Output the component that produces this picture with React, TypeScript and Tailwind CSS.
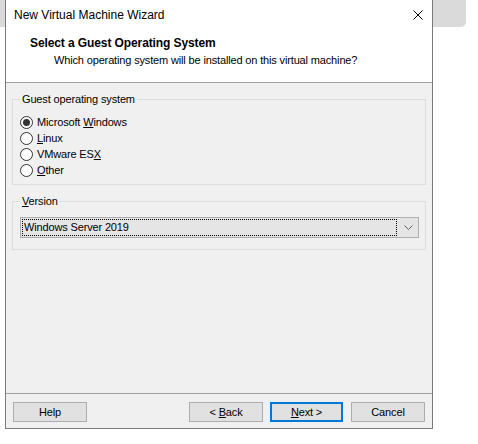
import React from "react";

const font = { fontFamily: '"Liberation Sans", Arial, sans-serif' };

// Segoe UI 9pt is narrower than Arial 12px; 11px with slight tracking matches widths
const body = "text-[11px] tracking-[-0.15px] text-black";

const Radio = ({ checked, children }: { checked?: boolean; children: React.ReactNode }) => (
  <label className="flex h-[16px] items-center pl-[7px]">
    <span className="flex h-[13px] w-[13px] items-center justify-center rounded-full border border-[#333333] bg-white">
      {checked && <span className="h-[7px] w-[7px] rounded-full bg-[#333333]" />}
    </span>
    <span className={"ml-[4px] leading-[16px] " + body}>{children}</span>
  </label>
);

const Btn = ({
  children,
  primary,
  className = "",
}: {
  children: React.ReactNode;
  primary?: boolean;
  className?: string;
}) => (
  <button
    className={
      "flex h-[20px] items-center justify-center bg-[#e1e1e1] " +
      body +
      " " +
      (primary ? "border-2 border-[#0078d7] " : "border border-[#adadad] ") +
      className
    }
  >
    <span>{children}</span>
  </button>
);

export default function App() {
  return (
    <div className="relative h-[444px] w-[478px] overflow-hidden bg-white" style={font}>
      {/* window behind */}
      <div className="absolute left-0 top-0 h-[27px] w-[466px] rounded-br-[5px] bg-[#dadada]" />

      <div className="relative ml-[5px] flex h-[429px] w-[428px] flex-col border-x border-b border-[#7a7a7a] bg-[#f0f0f0]">
        {/* title bar */}
        <div className="flex h-[30px] items-center justify-between bg-white pl-[8px] pr-[9px]">
          <span className="text-[12px] text-black">New Virtual Machine Wizard</span>
          <svg width="10" height="10" viewBox="0 0 10 10" className="mt-[-1px]">
            <path d="M0.5 0.5L9.5 9.5M9.5 0.5L0.5 9.5" stroke="#000" strokeWidth="1" />
          </svg>
        </div>

        {/* header */}
        <div className="h-[53px] border-b border-[#a0a0a0] bg-white">
          <div className="pl-[24px] pt-[4px] text-[12px] font-bold leading-[18px] tracking-[-0.1px] text-black">
            Select a Guest Operating System
          </div>
          <div className={"pl-[48px] leading-[16px] " + body}>
            Which operating system will be installed on this virtual machine?
          </div>
        </div>

        {/* body */}
        <div className="flex flex-1 flex-col px-[6px] pt-[8px]">
          <fieldset className="border border-[#dcdcdc] pb-[6px] pt-[7px]">
            <legend className={"ml-[7px] px-[2px] leading-[16px] " + body}>
              Guest operating system
            </legend>
            <Radio checked>
              Microsoft <u>W</u>indows
            </Radio>
            <Radio>
              <u>L</u>inux
            </Radio>
            <Radio>
              VMware ES<u>X</u>
            </Radio>
            <Radio>
              <u>O</u>ther
            </Radio>
          </fieldset>

          <fieldset className="mt-[8px] border border-[#dcdcdc] pb-[11px] pl-[7px] pr-[6px] pt-[8px]">
            <legend className={"ml-[0px] px-[2px] leading-[16px] " + body}>
              <u>V</u>ersion
            </legend>
            <div className="flex h-[21px] items-center border border-[#adadad] bg-[#e5e5e5] pl-[1px] pr-[5px]">
              <div className={"flex h-[17px] flex-1 items-center border border-dotted border-black pl-[1px] " + body}>
                Windows Server 2019
              </div>
              <svg width="9" height="5" viewBox="0 0 9 5" className="ml-[7px]">
                <path d="M0.5 0.5L4.5 4.5L8.5 0.5" stroke="#606060" strokeWidth="1" fill="none" />
              </svg>
            </div>
          </fieldset>
        </div>

        {/* footer */}
        <div className="border-t border-[#a0a0a0] pb-[6px] pt-[8px]">
          <div className="flex items-center px-[7px]">
            <Btn className="w-[74px]">Help</Btn>
            <Btn className="ml-auto w-[74px]">
              &lt; <u>B</u>ack
            </Btn>
            <Btn primary className="ml-[7px] w-[73px]">
              <u>N</u>ext &gt;
            </Btn>
            <Btn className="ml-[8px] w-[74px]">Cancel</Btn>
          </div>
        </div>
      </div>
    </div>
  );
}
